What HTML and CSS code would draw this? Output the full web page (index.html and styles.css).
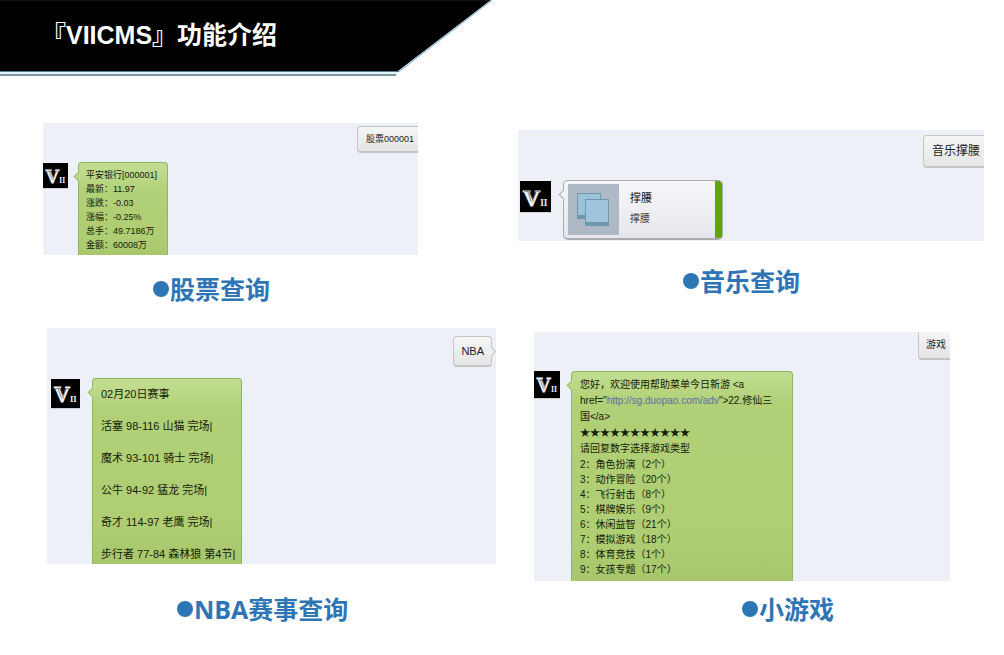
FILE: index.html
```html
<!DOCTYPE html>
<html lang="zh-CN">
<head>
<meta charset="utf-8">
<title>『VIICMS』功能介绍</title>
<link rel="stylesheet" href="styles.css">
</head>
<body>
<header class="banner">
  <svg class="banner-shape" width="500" height="78" viewBox="0 0 500 78" aria-hidden="true">
    <path d="M0 0H491L398 71H0Z" fill="#000"/>
    <path d="M0 0.5H490" stroke="#0b1418"/>
    <path d="M492 0L399 71.500" stroke="#8fc0d6" stroke-width="1.200"/>
    <path d="M0 71.500H399" stroke="#57808f"/>
    <path d="M0 73H398" stroke="#dcf6fa" stroke-width="2"/>
    <path d="M0 75H396" stroke="#7a98a6" stroke-width="2"/>
  </svg>
  <h1 class="banner-title">『VIICMS』功能介绍</h1>
</header>
<main class="features">
  <div class="column">
    <section class="feature stock">
      <div class="chat">
        <p class="sent cut">股票000001</p>
        <div class="reply">
          <svg class="avatar" viewBox="0 0 30 30">
            <text x="3" y="24" class="logo-v">V<tspan class="logo-ii">II</tspan></text>
            <path class="logo-grain" d="M7 9l4 11M9 9l4 11M15 10l-2 7M4 10h6M14 10h5"/>
          </svg>
          <div class="bubble">
            <p>平安银行[000001]</p>
            <p>最新：11.97</p>
            <p>涨跌：-0.03</p>
            <p>涨幅：-0.25%</p>
            <p>总手：49.7186万</p>
            <p>金额：60008万</p>
          </div>
        </div>
      </div>
      <h2 class="caption"><span class="dot"></span>股票查询</h2>
    </section>
    <section class="feature nba">
      <div class="chat">
        <p class="sent tail">NBA</p>
        <div class="reply">
          <svg class="avatar" viewBox="0 0 30 30">
            <text x="3" y="24" class="logo-v">V<tspan class="logo-ii">II</tspan></text>
            <path class="logo-grain" d="M7 9l4 11M9 9l4 11M15 10l-2 7M4 10h6M14 10h5"/>
          </svg>
          <div class="bubble">
            <p>02月20日赛事</p>
            <p>活塞 98-116 山猫 完场|</p>
            <p>魔术 93-101 骑士 完场|</p>
            <p>公牛 94-92 猛龙 完场|</p>
            <p>奇才 114-97 老鹰 完场|</p>
            <p>步行者 77-84 森林狼 第4节|</p>
          </div>
        </div>
      </div>
      <h2 class="caption"><span class="dot"></span>NBA赛事查询</h2>
    </section>
  </div>
  <div class="column">
    <section class="feature music">
      <div class="chat">
        <p class="sent cut">音乐撑腰</p>
        <div class="reply">
          <svg class="avatar" viewBox="0 0 30 30">
            <text x="3" y="24" class="logo-v">V<tspan class="logo-ii">II</tspan></text>
            <path class="logo-grain" d="M7 9l4 11M9 9l4 11M15 10l-2 7M4 10h6M14 10h5"/>
          </svg>
          <div class="card">
            <svg class="thumb" viewBox="0 0 51 51" aria-hidden="true">
              <rect width="51" height="51" fill="#afb8c5"/>
              <rect x="9" y="9" width="24" height="26" fill="#6e98ae"/>
              <rect x="10" y="10" width="22" height="21" fill="#9cc1da"/>
              <rect x="17" y="15" width="24" height="27" fill="#6e98ae"/>
              <rect x="18" y="16" width="22" height="22" fill="#9fc4dc"/>
            </svg>
            <div class="song">
              <p class="song-name">撑腰</p>
              <p class="song-note">撑腰</p>
            </div>
          </div>
        </div>
      </div>
      <h2 class="caption"><span class="dot"></span>音乐查询</h2>
    </section>
    <section class="feature games">
      <div class="chat">
        <p class="sent cut top">游戏</p>
        <div class="reply">
          <svg class="avatar" viewBox="0 0 30 30">
            <text x="3" y="24" class="logo-v">V<tspan class="logo-ii">II</tspan></text>
            <path class="logo-grain" d="M7 9l4 11M9 9l4 11M15 10l-2 7M4 10h6M14 10h5"/>
          </svg>
          <div class="bubble">
            <p class="intro">您好，欢迎使用帮助菜单今日新游 &lt;a<br>href="<a href="#">http://sg.duopao.com/adv</a>"&gt;22.修仙三<br>国&lt;/a&gt;<br>★★★★★★★★★★★<br>请回复数字选择游戏类型</p>
            <p>2：角色扮演（2个）</p>
            <p>3：动作冒险（20个）</p>
            <p>4：飞行射击（8个）</p>
            <p>5：棋牌娱乐（9个）</p>
            <p>6：休闲益智（21个）</p>
            <p>7：模拟游戏（18个）</p>
            <p>8：体育竞技（1个）</p>
            <p>9：女孩专题（17个）</p>
          </div>
        </div>
      </div>
      <h2 class="caption"><span class="dot"></span>小游戏</h2>
    </section>
  </div>
</main>
</body>
</html>
```
FILE: styles.css
```css
* { box-sizing: border-box; }
body, h1, h2, p { margin: 0; }
body {
  background: #fff;
  color: #1c1c1c;
  font-family: "Liberation Sans", "Noto Sans CJK SC", sans-serif;
}

.banner { position: relative; height: 78px; }
.banner-shape { position: absolute; top: 0; left: 0; }
.banner-title {
  position: relative;
  padding: 17px 0 0 41px;
  color: #fff;
  font-size: 25px;
  line-height: 36px;
}

.features { display: grid; grid-template-columns: 1fr 1fr; }
.column { display: flex; flex-direction: column; }
.chat {
  display: flex;
  flex-direction: column;
  background: #edf1f7;
  overflow: hidden;
}
.sent {
  position: relative;
  align-self: flex-end;
  border: 1px solid #c3c5c8;
  border-bottom: 2px solid #c3c5c8;
  border-radius: 4px;
  background: linear-gradient(#f6f6f6, #e5e5e6);
}
.sent.cut { border-right: 0; border-radius: 4px 0 0 4px; }
.sent.top { border-top: 0; border-radius: 0 0 0 4px; }
.sent.tail::after {
  content: "";
  position: absolute;
  top: 11px;
  right: -4px;
  width: 6px;
  height: 6px;
  border: solid #c3c5c8;
  border-width: 1px 1px 0 0;
  background: #eee;
  transform: rotate(45deg);
}

.reply { display: flex; align-items: flex-start; }
.avatar { flex: none; background: #000; box-shadow: 0 1px 0 #d0d0d0; }
.logo-v {
  font: bold 23px "Liberation Serif", serif;
  fill: #f2f2f2;
  stroke: #f2f2f2;
  stroke-width: 1;
}
.logo-ii { font-size: 9px; stroke-width: 0; }
.logo-grain { fill: none; stroke: #666; stroke-width: 0.7; }

.bubble {
  position: relative;
  border: 1px solid #8fb562;
  border-bottom: 0;
  border-radius: 4px 4px 0 0;
  background: linear-gradient(#c3de92, #b1d077 30px, #afce73 80%, #a8c76d);
  color: #15200a;
  white-space: nowrap;
}
.bubble::before, .card::before {
  content: "";
  position: absolute;
  top: 10px;
  left: -4px;
  width: 6px;
  height: 6px;
  border: solid #9fc270;
  border-width: 0 0 1px 1px;
  background: #bcd989;
  transform: rotate(45deg);
}
.bubble a { color: #5c6fa8; text-decoration: none; }

.caption {
  display: flex;
  align-items: center;
  gap: 1px;
  color: #2e75b6;
  font-family: "Open Sans", "Noto Sans CJK SC", sans-serif;
  font-size: 25px;
  line-height: 36px;
}
.dot { width: 16px; height: 16px; border-radius: 50%; background: currentColor; }

.stock { margin: 45px 84px 0 43px; }
.stock .sent { margin-top: 3px; padding: 0 4px 0 8px; font-size: 9px; line-height: 24px; }
.stock .reply { gap: 10px; margin-top: 9px; font-size: 9px; line-height: 14px; }
.stock .avatar { width: 25px; height: 25px; margin-top: 1px; }
.stock .bubble { width: 90px; padding: 5px 7px 3px; }
.stock .caption { padding: 16px 0 0 110px; }

.nba { margin: 21px 6px 0 47px; }
.nba .sent { margin: 8px 4px 0 0; padding: 0 7px; font-size: 11px; line-height: 28px; }
.nba .reply { gap: 12px; margin: 11px 0 0 4px; font-size: 11px; line-height: 32px; }
.nba .avatar { width: 29px; height: 29px; margin-top: 1px; }
.nba .bubble { width: 150px; padding: 0 8px; }
.nba .bubble p:first-child { margin-top: -1px; }
.nba .bubble p:last-child { margin-bottom: -6px; }
.nba .caption { padding: 27px 0 0 130px; }

.music { margin: 52px 20px 0 16px; }
.music .sent { margin-top: 5px; padding: 0 4px 0 8px; font-size: 12px; line-height: 30px; }
.music .reply { gap: 12px; margin: 12px 0 1px 2px; }
.music .avatar { width: 31px; height: 31px; margin-top: 1px; }
.card {
  position: relative;
  display: flex;
  gap: 11px;
  width: 160px;
  padding: 3px 4px;
  border: 1px solid #aaabb0;
  border-bottom-width: 2px;
  border-radius: 5px;
  background: linear-gradient(to right, transparent calc(100% - 7px), #62a50b 0), linear-gradient(#f7f7fa, #e6e7ec);
}
.card::before { border-color: #aaabb0; background: #f3f3f6; }
.thumb { width: 51px; height: 51px; }
.song { display: flex; flex-direction: column; gap: 4px; padding-top: 5px; }
.song-name { color: #111; font-size: 11px; line-height: 18px; }
.song-note { color: #444; font-size: 10px; line-height: 16px; }
.music .caption { padding: 22px 0 0 165px; }

.games { margin: 33px 54px 0 32px; }
.games .sent { padding: 0 4px 0 7px; font-size: 10px; line-height: 26px; }
.games .reply { gap: 11px; margin-top: 11px; font-size: 10px; line-height: 15px; }
.games .avatar { width: 26px; height: 27px; }
.games .bubble { width: 222px; padding: 5px 8px 4px; }
.games .intro { line-height: 16px; }
.games .caption { padding: 10px 0 0 208px; }
```
